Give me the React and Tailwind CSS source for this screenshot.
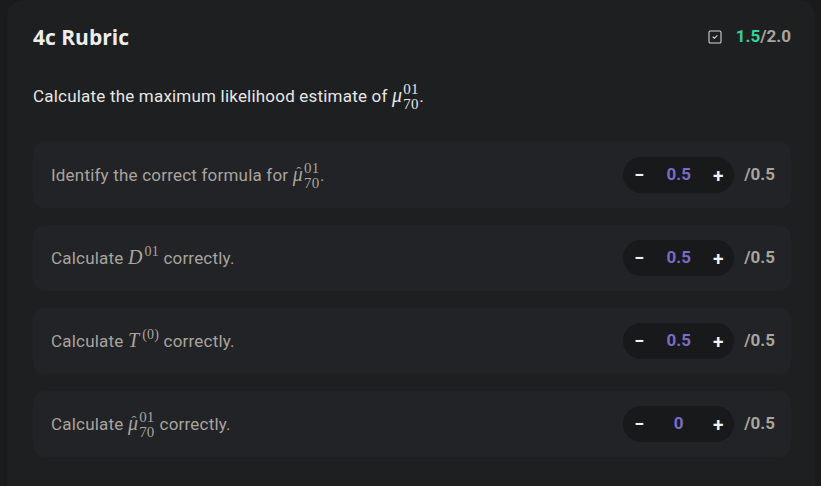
import { SquareCheck } from 'lucide-react';

const criteria = [
  { id: 1, label: 'identify', score: '0.5', max: '0.5' },
  { id: 2, label: 'd01', score: '0.5', max: '0.5' },
  { id: 3, label: 't0', score: '0.5', max: '0.5' },
  { id: 4, label: 'muhat', score: '0', max: '0.5' },
];

const mathFont = { fontFamily: '"Liberation Serif", "DejaVu Serif", serif' };

function Mu({ hat }) {
  return (
    <span className="relative inline-block italic text-[20px] leading-none" style={mathFont}>
      μ
      {hat && (
        <span className="absolute left-[2px] right-0 top-[1px] text-center not-italic text-[15px] leading-none">
          ˆ
        </span>
      )}
    </span>
  );
}

// stacked super/subscript that does not change the line height
function SupSub({ sup, sub }) {
  return (
    <span className="relative inline-block w-[16px] h-[1px] ml-[1px] text-[15px] leading-[12px]" style={mathFont}>
      <span className="absolute left-0 bottom-[7px]">{sup}</span>
      <span className="absolute left-0 bottom-[-8px]">{sub}</span>
    </span>
  );
}

function Label({ kind }) {
  if (kind === 'identify')
    return (
      <>
        Identify the correct formula for <Mu hat />
        <SupSub sup="01" sub="70" />.
      </>
    );
  if (kind === 'd01')
    return (
      <>
        Calculate{' '}
        <span className="italic text-[20px] leading-none" style={mathFont}>D</span>
        <sup className="text-[14px] -top-[8px] ml-[2px]" style={mathFont}>01</sup> correctly.
      </>
    );
  if (kind === 't0')
    return (
      <>
        Calculate{' '}
        <span className="italic text-[20px] leading-none" style={mathFont}>T</span>
        <sup className="text-[14px] -top-[8px] ml-[3px]" style={mathFont}>(0)</sup> correctly.
      </>
    );
  return (
    <>
      Calculate <Mu hat />
      <SupSub sup="01" sub="70" /> correctly.
    </>
  );
}

function Stepper({ value }) {
  return (
    <div className="flex items-center h-[36px] w-[111px] rounded-full bg-[#18191b] px-[10px] justify-between">
      <button className="w-[12px] text-[#f2f2f2] text-[18px] leading-none font-bold">−</button>
      <span className="text-[17px] font-bold text-[#7a6bc6]">{value}</span>
      <button className="w-[12px] text-[#f2f2f2] text-[19px] leading-none font-semibold">+</button>
    </div>
  );
}

export default function App() {
  return (
    <div
      className="min-h-[486px] bg-[#1a1b1d] pl-[7px] pr-[6px] overflow-hidden"
      style={{ fontFamily: 'Roboto, "Liberation Sans", sans-serif' }}
    >
      <div className="h-[486px] rounded-t-2xl bg-[#1e1f21] pl-[26px] pr-[24px] pt-[23px]">
        <div className="flex items-center justify-between">
          <h2
            className="text-[21px] leading-[28px] font-bold text-[#ededed]"
            style={{ fontFamily: '"Open Sans", "Noto Sans", sans-serif' }}
          >
            4c Rubric
          </h2>
          <div className="flex items-center gap-[13px] text-[17px] font-bold">
            <SquareCheck size={16} strokeWidth={1.6} className="text-[#d6d6d6]" />
            <span>
              <span className="text-[#34d399]">1.5</span>
              <span className="text-[#a8a49e]">/2.0</span>
            </span>
          </div>
        </div>

        <p className="mt-[33px] text-[17px] tracking-[0.2px] leading-[24px] text-[#e6e6e6]">
          Calculate the maximum likelihood estimate of <Mu />
          <SupSub sup="01" sub="70" />.
        </p>

        <div className="mt-[34px] flex flex-col gap-[17px]">
          {criteria.map((c) => (
            <div
              key={c.id}
              className="flex h-[66px] items-center justify-between rounded-xl bg-[#222326] pl-[18px] pr-[16px]"
            >
              <div className="text-[17px] leading-[24px] tracking-[0.2px] text-[#a8a49e]">
                <Label kind={c.label} />
              </div>
              <div className="flex items-center gap-[10px]">
                <Stepper value={c.score} />
                <span className="text-[17px] font-bold text-[#a8a49e]">/{c.max}</span>
              </div>
            </div>
          ))}
        </div>
      </div>
    </div>
  );
}
